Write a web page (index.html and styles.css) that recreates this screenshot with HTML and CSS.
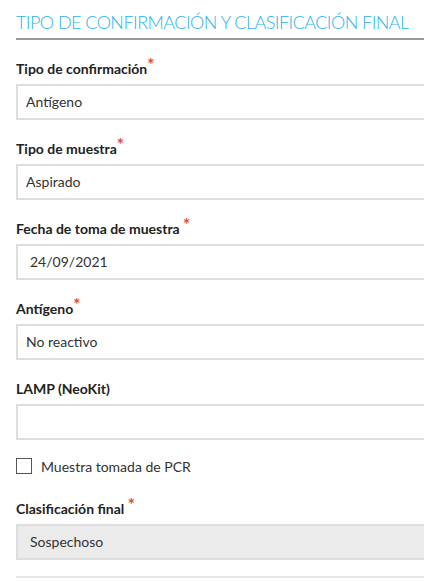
FILE: index.html
```html
<!DOCTYPE html>
<html lang="es">
<head>
<meta charset="utf-8">
<link rel="stylesheet" href="styles.css">
</head>
<body>
<section class="panel">
  <h2 class="title">TIPO DE CONFIRMACIÓN Y CLASIFICACIÓN FINAL</h2>
  <div class="field">
    <div class="label">Tipo de confirmación<span class="req">*</span></div>
    <div class="input">Antígeno</div>
  </div>
  <div class="field">
    <div class="label">Tipo de muestra<span class="req">*</span></div>
    <div class="input">Aspirado</div>
  </div>
  <div class="field">
    <div class="label">Fecha de toma de muestra <span class="req">*</span></div>
    <div class="input date">24/09/2021</div>
  </div>
  <div class="field">
    <div class="label">Antígeno<span class="req">*</span></div>
    <div class="input">No reactivo</div>
  </div>
  <div class="field">
    <div class="label">LAMP (NeoKit)</div>
    <div class="input"></div>
  </div>
  <div class="check">
    <span class="box"></span>
    <span class="check-text">Muestra tomada de PCR</span>
  </div>
  <div class="field">
    <div class="label">Clasificación final <span class="req">*</span></div>
    <div class="input disabled">Sospechoso</div>
  </div>
  <div class="rule"></div>
</section>
</body>
</html>
```
FILE: styles.css
```css
html, body {
  margin: 0;
  padding: 0;
  overflow: hidden;
  background: #fff;
}
body {
  font-family: Lato, "Open Sans", sans-serif;
  color: #222;
}
.panel {
  width: 460px;
  padding: 10px 0 0 16px;
}
.title {
  margin: 0;
  font-size: 18px;
  font-weight: 300;
  letter-spacing: -0.55px;
  color: #2db3ea;
  line-height: 24px;
  padding-bottom: 4px;
  border-bottom: 2px solid #999;
  white-space: nowrap;
}
.field {
  margin-top: 19px;
}
.label {
  font-size: 14px;
  font-weight: 700;
  line-height: 20px;
  margin-bottom: 5px;
  color: #222;
}
.req {
  color: #e2463a;
  font-size: 17px;
  font-weight: 700;
  line-height: 0;
  position: relative;
  top: -3px;
}
.input {
  box-sizing: border-box;
  height: 36px;
  border: 2px solid #ddd;
  background: #fff;
  font-size: 14px;
  line-height: 32px;
  padding-left: 8px;
  color: #333;
}
.input.date {
  padding-left: 12px;
}
.input.disabled {
  background: #ebebec;
  padding-left: 12px;
}
.check {
  display: flex;
  align-items: center;
  gap: 9px;
  margin-top: 17px;
  height: 18px;
}
.box {
  box-sizing: border-box;
  width: 16px;
  height: 16px;
  border: 1px solid #555;
  background: #fff;
}
.check-text {
  font-size: 14px;
  color: #333;
}
.check + .field {
  margin-top: 24px;
}
.rule {
  margin-top: 16px;
  border-top: 2px solid #e6e6e6;
}
```
